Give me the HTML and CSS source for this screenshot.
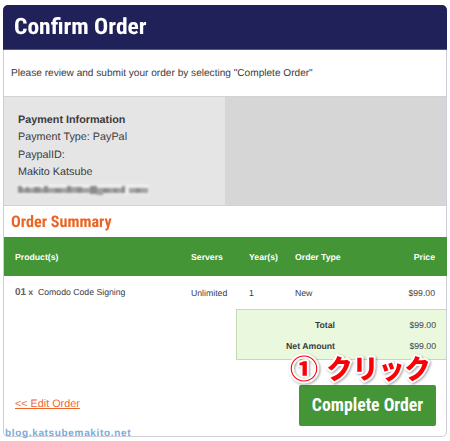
FILE: index.html
```html
<!DOCTYPE html>
<html lang="en">
<head>
<meta charset="utf-8">
<title>Confirm Order</title>
<link rel="stylesheet" href="styles.css">
</head>
<body>
<main class="card">
  <header class="card-header"><h1 class="condensed">Confirm Order</h1></header>
  <p class="message">Please review and submit your order by selecting "Complete Order"</p>
  <section class="payment">
    <div class="payment-info">
      <strong>Payment Information</strong>
      <span>Payment Type: PayPal</span>
      <span>PaypalID:</span>
      <span>Makito Katsube</span>
      <svg class="redacted" width="134" height="13" viewBox="0 0 134 13" aria-hidden="true">
        <rect x="0" y="0" width="132" height="11" fill="#eeeeee"/>
        <g fill="#8b8b8b">
          <rect x="1" y="2" width="4" height="7"/><rect x="9" y="3" width="3" height="6"/><rect x="17" y="3" width="6" height="6"/><rect x="27" y="2" width="4" height="7"/><rect x="38" y="4" width="6" height="5"/><rect x="50" y="2" width="4" height="7"/><rect x="60" y="3" width="5" height="6"/><rect x="73" y="2" width="7" height="8"/><rect x="86" y="4" width="6" height="5"/><rect x="97" y="4" width="3" height="5"/><rect x="105" y="2" width="3" height="7"/><rect x="119" y="4" width="4" height="5"/>
        </g>
        <g fill="#a2a2a2">
          <rect x="5" y="4" width="4" height="5"/><rect x="12" y="4" width="5" height="5"/><rect x="23" y="4" width="4" height="5"/><rect x="31" y="4" width="7" height="5"/><rect x="44" y="4" width="6" height="5"/><rect x="54" y="3" width="6" height="6"/><rect x="65" y="4" width="8" height="5"/><rect x="80" y="4" width="6" height="7"/><rect x="92" y="4" width="5" height="5"/><rect x="100" y="4" width="5" height="5"/><rect x="112" y="4" width="7" height="5"/><rect x="123" y="4" width="8" height="5"/>
        </g>
      </svg>
    </div>
    <div class="payment-side"></div>
  </section>
  <div class="summary-title"><h2 class="condensed">Order Summary</h2></div>
  <div class="row head">
    <span>Product(s)</span><span>Servers</span><span>Year(s)</span><span>Order Type</span><span class="price">Price</span>
  </div>
  <div class="row item">
    <span class="product"><b class="qty">01</b><b class="times">x</b>Comodo Code Signing</span><span>Unlimited</span><span>1</span><span>New</span><span class="price">$99.00</span>
  </div>
  <dl class="totals">
    <dt>Total</dt><dd>$99.00</dd>
    <dt>Net Amount</dt><dd>$99.00</dd>
  </dl>
  <footer class="actions">
    <a class="edit" href="#">&lt;&lt; Edit Order</a>
    <button class="submit"><span class="condensed">Complete Order</span></button>
  </footer>
  <svg class="callout" width="160" height="45" viewBox="0 0 160 45">
    <g class="callout-text">
      <text x="10" y="33.5" textLength="28" lengthAdjust="spacingAndGlyphs">①</text>
      <text x="46.5" y="33.5" textLength="104" lengthAdjust="spacingAndGlyphs">クリック</text>
    </g>
  </svg>
  <span class="watermark">blog.katsubemakito.net</span>
</main>
</body>
</html>
```
FILE: styles.css
```css
* { box-sizing: border-box; }
body {
  margin: 0;
  padding: 5px 3px 0;
  height: 441px;
  overflow: hidden;
  background: #fff;
  color: #3b3b3d;
  font-family: "Liberation Sans", Arial, sans-serif;
  text-rendering: geometricPrecision;
}
h1, h2, p, dl, dd { margin: 0; }
.card {
  position: relative;
  width: 444px;
  height: 432px;
  border: 1px solid #cdced6;
  border-radius: 5px;
}
.condensed {
  display: inline-block;
  font-family: "Roboto Condensed", Roboto, sans-serif;
  font-weight: 700;
  white-space: nowrap;
  transform-origin: left center;
}
.card-header {
  height: 45px;
  margin: -1px -1px 0;
  padding: 0 11px;
  display: flex;
  align-items: center;
  background: #1f2158;
  border-bottom: 1px solid #55577f;
  border-radius: 5px 5px 0 0;
  color: #fff;
}
h1 { font-size: 22.5px; transform: scaleX(1.045); }
.message {
  height: 46px;
  padding-left: 7px;
  font-size: 10.1px;
  line-height: 47px;
  white-space: nowrap;
}
.payment {
  height: 110px;
  display: flex;
  border-top: 1px solid #d2d2d4;
  border-bottom: 1px solid #d2d2d4;
  font-size: 10.8px;
}
.payment-info {
  width: 221px;
  padding: 15px 0 0 14px;
  display: flex;
  flex-direction: column;
  background: #e5e5e5;
  line-height: 17.4px;
}
.payment-side { flex: 1; background: #d6d6d6; }
.redacted { margin: 2px 0 0 -1px; filter: blur(1.2px); }
.summary-title {
  height: 31px;
  padding-left: 7px;
  display: flex;
  align-items: center;
  color: #eb6423;
}
h2 { font-size: 16px; transform: scaleX(1.01); }
.row {
  display: grid;
  grid-template-columns: 176px 58px 46px 80px 1fr;
  align-items: center;
  padding: 0 12px 0 11px;
  font-size: 8.7px;
}
.head {
  height: 39px;
  margin: 0 -1px 0 0;
  background: #439536;
  color: #fff;
  font-weight: 700;
}
.item { height: 33px; padding-right: 11px; }
.price { text-align: right; }
.qty { font-size: 10px; color: #606063; }
.times { margin: 0 5px 0 2px; color: #606063; }
.totals {
  width: 210px;
  height: 51px;
  margin-left: auto;
  padding: 4px 10px 0 0;
  display: grid;
  grid-template-columns: 98px 1fr;
  grid-auto-rows: 21px;
  align-items: center;
  text-align: right;
  font-size: 8.7px;
  background: #eaf8dd;
  border: 1px solid #c8d9b8;
  border-right: 0;
}
.totals dt { font-weight: 700; }
.actions {
  display: flex;
  justify-content: space-between;
  padding: 25px 10px 0 11px;
}
.edit {
  margin-top: 13px;
  font-size: 10.8px;
  color: #ee642d;
  text-underline-offset: 1px;
}
.submit {
  width: 137px;
  height: 41px;
  padding: 0;
  border: 0;
  border-radius: 2px;
  background: #439536;
  color: #fff;
  font-size: 18px;
}
.submit .condensed { transform: translateY(-1px) scaleX(.985); transform-origin: center; }
.callout {
  position: absolute;
  left: 276px;
  top: 339px;
  filter: drop-shadow(1px 1px 1px rgba(0, 0, 0, .35));
}
.callout-text {
  fill: #fb0007;
  stroke: #fff;
  stroke-width: 4px;
  stroke-linejoin: round;
  paint-order: stroke;
  font: 900 27.5px "Noto Sans CJK JP", sans-serif;
}
.watermark {
  position: absolute;
  left: 1px;
  top: 421px;
  font-size: 10px;
  font-weight: 700;
  line-height: 14px;
  letter-spacing: .66px;
  color: #79acda;
}
```
